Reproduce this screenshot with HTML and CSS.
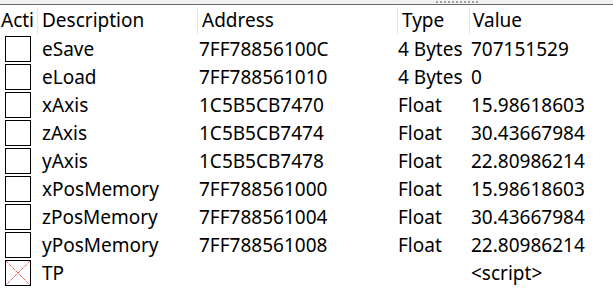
FILE: index.html
```html
<!DOCTYPE html>
<html>
<head>
<meta charset="utf-8">
<link rel="stylesheet" href="styles.css">
</head>
<body>
<div class="splitter"><div class="grip"></div></div>
<div class="list">
  <div class="row header">
    <div class="hc">Acti</div>
    <div class="hc">Description</div>
    <div class="hc">Address</div>
    <div class="hc">Type</div>
    <div class="hc last">Value</div>
  </div>
  <div class="row item">
    <div class="c chk"><span class="box"></span></div>
    <div class="c desc">eSave</div>
    <div class="c addr">7FF78856100C</div>
    <div class="c type">4 Bytes</div>
    <div class="c val">707151529</div>
  </div>
  <div class="row item">
    <div class="c chk"><span class="box"></span></div>
    <div class="c desc">eLoad</div>
    <div class="c addr">7FF788561010</div>
    <div class="c type">4 Bytes</div>
    <div class="c val">0</div>
  </div>
  <div class="row item">
    <div class="c chk"><span class="box"></span></div>
    <div class="c desc">xAxis</div>
    <div class="c addr">1C5B5CB7470</div>
    <div class="c type">Float</div>
    <div class="c val">15.98618603</div>
  </div>
  <div class="row item">
    <div class="c chk"><span class="box"></span></div>
    <div class="c desc">zAxis</div>
    <div class="c addr">1C5B5CB7474</div>
    <div class="c type">Float</div>
    <div class="c val">30.43667984</div>
  </div>
  <div class="row item">
    <div class="c chk"><span class="box"></span></div>
    <div class="c desc">yAxis</div>
    <div class="c addr">1C5B5CB7478</div>
    <div class="c type">Float</div>
    <div class="c val">22.80986214</div>
  </div>
  <div class="row item">
    <div class="c chk"><span class="box"></span></div>
    <div class="c desc">xPosMemory</div>
    <div class="c addr">7FF788561000</div>
    <div class="c type">Float</div>
    <div class="c val">15.98618603</div>
  </div>
  <div class="row item">
    <div class="c chk"><span class="box"></span></div>
    <div class="c desc">zPosMemory</div>
    <div class="c addr">7FF788561004</div>
    <div class="c type">Float</div>
    <div class="c val">30.43667984</div>
  </div>
  <div class="row item">
    <div class="c chk"><span class="box"></span></div>
    <div class="c desc">yPosMemory</div>
    <div class="c addr">7FF788561008</div>
    <div class="c type">Float</div>
    <div class="c val">22.80986214</div>
  </div>
  <div class="row item">
    <div class="c chk"><span class="box script"><svg width="26" height="26" viewBox="0 0 26 26"><line x1="1" y1="1" x2="25" y2="25" stroke="#ff0000" stroke-width="1" stroke-dasharray="1 1"/><line x1="25" y1="1" x2="1" y2="25" stroke="#ff0000" stroke-width="1" stroke-dasharray="1 1"/></svg></span></div>
    <div class="c desc">TP</div>
    <div class="c addr"></div>
    <div class="c type"></div>
    <div class="c val">&lt;script&gt;</div>
  </div>
</div>
</body>
</html>
```
FILE: styles.css
```css
html, body {
  margin: 0;
  padding: 0;
  background: #ffffff;
}
body {
  width: 613px;
  height: 302px;
  overflow: hidden;
  font-family: "Noto Sans", "Open Sans", sans-serif;
  font-size: 19px;
  color: #000;
}
.splitter {
  height: 4px;
  background: #f0f0f0;
  border-bottom: 1px solid #6a6a6a;
  box-sizing: content-box;
}
.grip {
  margin-left: 436px;
  width: 42px;
  height: 2px;
  padding-top: 1px;
  background-image: repeating-linear-gradient(90deg, #a0a0a0 0 2px, transparent 2px 4px);
  background-clip: content-box;
}
.row {
  display: grid;
  grid-template-columns: 38px 160px 200px 72px 1fr;
}
.header {
  height: 30px;
  padding-top: 2px;
  padding-bottom: 1px;
  box-sizing: border-box;
}
.hc {
  border-right: 1px solid #e5e5e5;
  padding-left: 4px;
  white-space: nowrap;
  overflow: hidden;
  line-height: 26px;
}
.hc:first-child {
  padding-left: 1px;
}
.hc.last {
  border-right: none;
  padding-left: 3px;
}
.item {
  height: 28px;
  align-items: center;
}
.c {
  white-space: nowrap;
  overflow: hidden;
  line-height: 28px;
}
.chk {
  height: 28px;
  display: flex;
  align-items: flex-start;
}
.box {
  display: block;
  margin-top: 1px;
  margin-left: 5px;
  width: 26px;
  height: 26px;
  box-sizing: border-box;
  border: 1px solid #000;
  background: #fff;
}
.box svg {
  display: block;
  margin: -1px;
}
.desc {
  padding-left: 4px;
}
.addr {
  padding-left: 1px;
}
.type {
  padding-left: 0;
}
.val {
  padding-left: 1px;
}
```
